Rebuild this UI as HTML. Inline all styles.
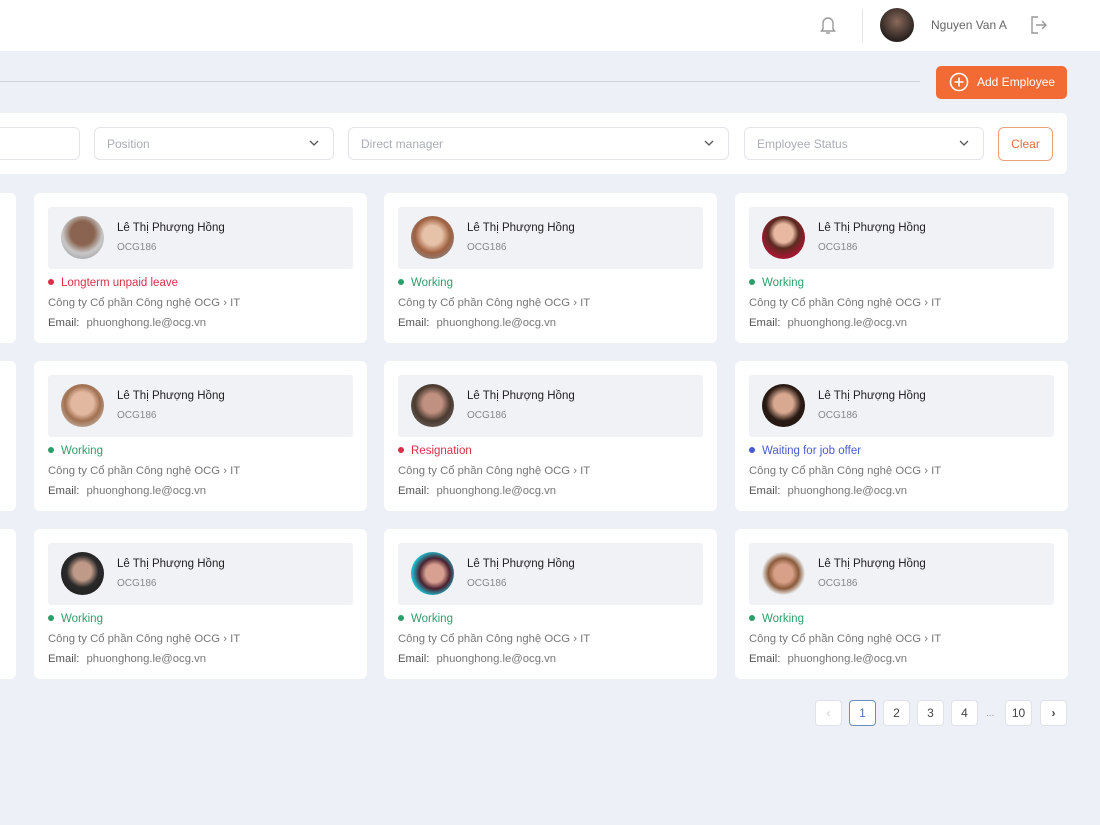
<!DOCTYPE html>
<html><head><meta charset="utf-8"><style>
*{box-sizing:border-box;margin:0;padding:0}
body{width:1100px;height:825px;background:#eef0f8;font-family:"Liberation Sans","Noto Sans CJK SC",sans-serif;position:relative;overflow:hidden}
.hdr{position:absolute;left:0;top:0;width:1100px;height:51px;background:#fff}
.abs{position:absolute}
.inp{position:absolute;top:127px;height:33px;border:1px solid #e2e4ea;border-radius:6px;background:#fff;font-size:12px;color:#a9adb6;padding:9px 12px}
.inp svg{position:absolute;right:14px;top:12px}
.card{position:absolute;width:333px;height:150px;background:#fff;border-radius:6px}
.box{position:absolute;left:14px;top:14px;width:305px;height:62px;background:#f1f2f6;border-radius:3px}
.av{position:absolute;left:13px;top:9px;width:43px;height:43px;border-radius:50%}
.nm{position:absolute;left:69px;top:15px;font-size:11.5px;color:#222}
.id{position:absolute;left:69px;top:35px;font-size:10px;color:#888}
.st{position:absolute;left:14px;top:84px;font-size:11.5px}
.st i{display:inline-block;width:6px;height:6px;border-radius:50%;margin-right:7px;vertical-align:1px}
.co{position:absolute;left:14px;top:104px;font-size:11.3px;color:#777}
.em{position:absolute;left:14px;top:124px;font-size:11.3px;color:#777}
.em b{font-weight:normal;color:#555;margin-right:4px}
.pg{position:absolute;top:700px;width:27px;height:26px;border:1px solid #e0e2e8;border-radius:4px;background:#fff;font-size:12px;color:#444;text-align:center;line-height:24px}
</style></head><body>
<div class="hdr">
<svg class="abs" style="left:819px;top:15px" width="18" height="20" viewBox="0 0 18 20" fill="none" stroke="#999" stroke-width="1.4"><path d="M4 14V8a5 5 0 0 1 10 0v6l1.5 2h-13z"/><path d="M7 18h4"/></svg>
<div class="abs" style="left:862px;top:9px;width:1px;height:33px;background:#e4e4e4"></div>
<div class="abs" style="left:880px;top:8px;width:34px;height:34px;border-radius:50%;background:radial-gradient(circle at 50% 40%,#8a6a5a,#2a2220 70%)"></div>
<div class="abs" style="left:931px;top:18px;font-size:12px;color:#666">Nguyen Van A</div>
<svg class="abs" style="left:1029px;top:15px" width="18" height="20" viewBox="0 0 18 20" fill="none" stroke="#999" stroke-width="1.4"><path d="M9 2H3v16h6"/><path d="M7 10h10M13 6l4 4-4 4"/></svg>
</div>
<div class="abs" style="left:0;top:81px;width:920px;height:1px;background:#d0d2d8"></div>
<div class="abs" style="left:936px;top:66px;width:131px;height:33px;background:#f26b35;border-radius:5px;color:#fff;font-size:12px;padding:9px 0 0 41px">Add Employee</div>
<svg class="abs" style="left:949px;top:72px" width="20" height="20" viewBox="0 0 20 20" fill="none" stroke="#fff" stroke-width="1.6"><circle cx="10" cy="10" r="8.5"/><path d="M10 5.5v9M5.5 10h9"/></svg>
<div class="abs" style="left:-10px;top:113px;width:1077px;height:61px;background:#fff;border-radius:6px"></div>
<div class="inp" style="left:-10px;width:90px"></div>
<div class="inp" style="left:94px;width:240px">Position<svg width="10" height="6" viewBox="0 0 10 6" fill="none" stroke="#555" stroke-width="1.3"><path d="M1 1l4 4 4-4"/></svg></div>
<div class="inp" style="left:348px;width:381px">Direct manager<svg width="10" height="6" viewBox="0 0 10 6" fill="none" stroke="#555" stroke-width="1.3"><path d="M1 1l4 4 4-4"/></svg></div>
<div class="inp" style="left:744px;width:240px">Employee Status<svg width="10" height="6" viewBox="0 0 10 6" fill="none" stroke="#555" stroke-width="1.3"><path d="M1 1l4 4 4-4"/></svg></div>
<div class="abs" style="left:998px;top:127px;width:55px;height:34px;border:1px solid #e9a27f;border-radius:6px;color:#e0703f;font-size:12px;text-align:center;line-height:32px">Clear</div>

<div class="card" style="left:-317px;top:193px"></div>
<div class="card" style="left:-317px;top:361px"></div>
<div class="card" style="left:-317px;top:529px"></div>

<div class="card" style="left:34px;top:193px"><div class="box"><div class="av" style="background:radial-gradient(circle at 50% 40%,#8a6450 35%,#c9c9c9 60%,#888)"></div><div class="nm">Lê Thị Phượng Hồng</div><div class="id">OCG186</div></div><div class="st" style="color:#d9304a"><i style="background:#d9304a"></i>Longterm unpaid leave</div><div class="co">Công ty Cổ phần Công nghệ OCG › IT</div><div class="em"><b>Email:</b> phuonghong.le@ocg.vn</div></div>
<div class="card" style="left:384px;top:193px"><div class="box"><div class="av" style="background:radial-gradient(circle at 50% 45%,#e6c2a8 30%,#a06040 55%,#7aa0b8)"></div><div class="nm">Lê Thị Phượng Hồng</div><div class="id">OCG186</div></div><div class="st" style="color:#2e9e6a"><i style="background:#2e9e6a"></i>Working</div><div class="co">Công ty Cổ phần Công nghệ OCG › IT</div><div class="em"><b>Email:</b> phuonghong.le@ocg.vn</div></div>
<div class="card" style="left:735px;top:193px"><div class="box"><div class="av" style="background:radial-gradient(circle at 50% 40%,#e8b8a0 28%,#5a2a20 45%,#a01830 70%)"></div><div class="nm">Lê Thị Phượng Hồng</div><div class="id">OCG186</div></div><div class="st" style="color:#2e9e6a"><i style="background:#2e9e6a"></i>Working</div><div class="co">Công ty Cổ phần Công nghệ OCG › IT</div><div class="em"><b>Email:</b> phuonghong.le@ocg.vn</div></div>

<div class="card" style="left:34px;top:361px"><div class="box"><div class="av" style="background:radial-gradient(circle at 50% 45%,#e2b8a0 35%,#a07050 55%,#ddd)"></div><div class="nm">Lê Thị Phượng Hồng</div><div class="id">OCG186</div></div><div class="st" style="color:#2e9e6a"><i style="background:#2e9e6a"></i>Working</div><div class="co">Công ty Cổ phần Công nghệ OCG › IT</div><div class="em"><b>Email:</b> phuonghong.le@ocg.vn</div></div>
<div class="card" style="left:384px;top:361px"><div class="box"><div class="av" style="background:radial-gradient(circle at 50% 45%,#c09080 30%,#4a3a30 55%,#777)"></div><div class="nm">Lê Thị Phượng Hồng</div><div class="id">OCG186</div></div><div class="st" style="color:#d9304a"><i style="background:#d9304a"></i>Resignation</div><div class="co">Công ty Cổ phần Công nghệ OCG › IT</div><div class="em"><b>Email:</b> phuonghong.le@ocg.vn</div></div>
<div class="card" style="left:735px;top:361px"><div class="box"><div class="av" style="background:radial-gradient(circle at 50% 45%,#d8a890 30%,#2a1a14 55%,#1a1410)"></div><div class="nm">Lê Thị Phượng Hồng</div><div class="id">OCG186</div></div><div class="st" style="color:#4a5ad0"><i style="background:#4a5ad0"></i>Waiting for job offer</div><div class="co">Công ty Cổ phần Công nghệ OCG › IT</div><div class="em"><b>Email:</b> phuonghong.le@ocg.vn</div></div>

<div class="card" style="left:34px;top:529px"><div class="box"><div class="av" style="background:radial-gradient(circle at 50% 45%,#c09a88 28%,#2a2a2a 50%,#1a1a1a)"></div><div class="nm">Lê Thị Phượng Hồng</div><div class="id">OCG186</div></div><div class="st" style="color:#2e9e6a"><i style="background:#2e9e6a"></i>Working</div><div class="co">Công ty Cổ phần Công nghệ OCG › IT</div><div class="em"><b>Email:</b> phuonghong.le@ocg.vn</div></div>
<div class="card" style="left:384px;top:529px"><div class="box"><div class="av" style="background:radial-gradient(circle at 55% 50%,#d8a090 28%,#4a2030 48%,#20b8c8 70%)"></div><div class="nm">Lê Thị Phượng Hồng</div><div class="id">OCG186</div></div><div class="st" style="color:#2e9e6a"><i style="background:#2e9e6a"></i>Working</div><div class="co">Công ty Cổ phần Công nghệ OCG › IT</div><div class="em"><b>Email:</b> phuonghong.le@ocg.vn</div></div>
<div class="card" style="left:735px;top:529px"><div class="box"><div class="av" style="background:radial-gradient(circle at 50% 50%,#d8a088 30%,#8a5a3a 50%,#e8e8e8 70%)"></div><div class="nm">Lê Thị Phượng Hồng</div><div class="id">OCG186</div></div><div class="st" style="color:#2e9e6a"><i style="background:#2e9e6a"></i>Working</div><div class="co">Công ty Cổ phần Công nghệ OCG › IT</div><div class="em"><b>Email:</b> phuonghong.le@ocg.vn</div></div>

<div class="pg" style="left:815px;color:#ccc">‹</div>
<div class="pg" style="left:849px;border-color:#6b8fb8;color:#4a78b0">1</div>
<div class="pg" style="left:883px">2</div>
<div class="pg" style="left:917px">3</div>
<div class="pg" style="left:951px">4</div>
<div class="abs" style="left:986px;top:708px;font-size:10px;color:#999">...</div>
<div class="pg" style="left:1005px">10</div>
<div class="pg" style="left:1040px;font-weight:bold">›</div>
</body></html>
